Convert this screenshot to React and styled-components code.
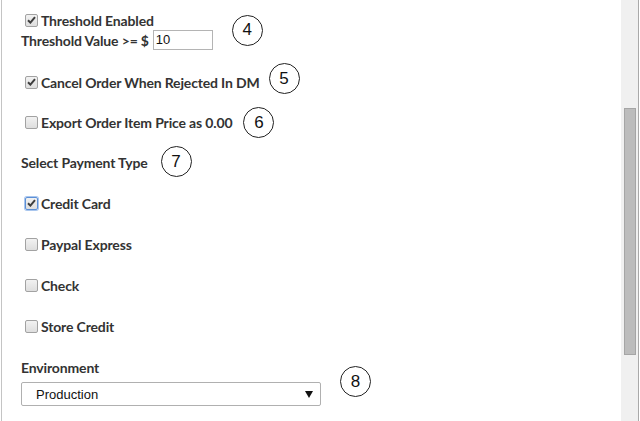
import React from "react";
import styled, { createGlobalStyle } from "styled-components";

const Global = createGlobalStyle`
  html, body { margin: 0; padding: 0; background: #fff; }
  body { font-family: Lato, "Open Sans", sans-serif; overflow: hidden; }
`;

const Page = styled.div`
  display: flex;
  width: 640px;
  height: 421px;
  background: #fff;
`;

const Main = styled.div`
  flex: 1;
  margin-left: 1px;
  border-left: 1px solid #c4c4c4;
  padding: 10px 0 0 19px;
  display: flex;
  flex-direction: column;
  color: #333;
`;

const Track = styled.div`
  width: 17px;
  height: 421px;
  background: #f0f0f0;
  border-right: 1px solid #a9a9a9;
  margin-right: 1px;
  display: flex;
  justify-content: center;
`;

const Thumb = styled.div`
  width: 12px;
  height: 247px;
  margin-top: 108px;
  background: #bcbcbc;
  border: 1px solid #a5a5a5;
  box-sizing: border-box;
  margin-left: 2px;
  margin-right: 1px;
`;

const Row = styled.div`
  display: flex;
  align-items: ${(p) => p.$align || "center"};
  gap: ${(p) => p.$gap || 0}px;
  margin-top: ${(p) => p.$mt || 0}px;
`;

const Col = styled.div`
  display: flex;
  flex-direction: column;
`;

const Line = styled.div`
  display: flex;
  align-items: center;
  height: 20px;
  margin-top: ${(p) => p.$mt || 0}px;
  font-size: 14px;
  font-weight: 700;
  line-height: 17px;
  letter-spacing: -0.15px;
  white-space: nowrap;
`;

const Box = styled.span`
  width: 13px;
  height: 13px;
  box-sizing: border-box;
  margin: 0 3px 0 4px;
  border-radius: 2px;
  border: 1px solid ${(p) => (p.$focus ? "#5b8fd6" : "#a2a2a2")};
  box-shadow: ${(p) => (p.$focus ? "0 0 0 1px #a9c6ee" : "none")};
  background: linear-gradient(#f2f2f2, #dedede);
  display: flex;
  align-items: center;
  justify-content: center;
  flex: none;
`;

const ValueInput = styled.div`
  width: 60px;
  height: 20px;
  box-sizing: border-box;
  margin-left: 4px;
  border: 1px solid #b4b4b4;
  padding-left: 2px;
  font-family: "Liberation Sans", Arial, sans-serif;
  font-size: 13px;
  font-weight: 400;
  letter-spacing: 0;
  line-height: 18px;
  color: #111;
`;

const Circle = styled.div`
  width: 31px;
  height: 31px;
  box-sizing: border-box;
  border: 1px solid #222;
  border-radius: 50%;
  display: flex;
  align-items: center;
  justify-content: center;
  font-family: "Liberation Sans", Arial, sans-serif;
  font-size: 17px;
  color: #111;
  flex: none;
`;

const Label = styled.div`
  margin-top: ${(p) => p.$pad || 0}px;
`;

const Select = styled.div`
  width: 300px;
  height: 24px;
  box-sizing: border-box;
  margin-top: 5px;
  border: 1px solid #b0b0b0;
  border-radius: 2px;
  display: flex;
  align-items: center;
  justify-content: space-between;
  padding: 0 7px 0 14px;
  font-family: "Liberation Sans", Arial, sans-serif;
  font-size: 13px;
  color: #111;
`;

const Check = ({ checked, focus }) => (
  <Box $focus={focus}>
    {checked && (
      <svg width="9" height="8" viewBox="0 0 9 8">
        <path d="M1 4.2 L3.4 6.6 L8 1.2" fill="none" stroke="#3e3e3e" strokeWidth="2" />
      </svg>
    )}
  </Box>
);

const CheckLine = ({ checked, focus, children, mt }) => (
  <Line $mt={mt}>
    <Check checked={checked} focus={focus} />
    {children}
  </Line>
);

export default function App() {
  return (
    <>
      <Global />
      <Page>
        <Main>
          <Row $gap={19}>
            <Col>
              <CheckLine checked>Threshold Enabled</CheckLine>
              <Line>
                Threshold Value &gt;= $
                <ValueInput>10</ValueInput>
              </Line>
            </Col>
            <Circle>4</Circle>
          </Row>

          <Row $align="flex-start" $gap={9} $mt={13}>
            <Label $pad={9}>
              <CheckLine checked>Cancel Order When Rejected In DM</CheckLine>
            </Label>
            <Circle>5</Circle>
          </Row>

          <Row $align="flex-start" $gap={11} $mt={13}>
            <Label $pad={5}>
              <CheckLine>Export Order Item Price as 0.00</CheckLine>
            </Label>
            <Circle>6</Circle>
          </Row>

          <Row $align="flex-start" $gap={13} $mt={8}>
            <Label $pad={6}>
              <Line>Select Payment Type</Line>
            </Label>
            <Circle>7</Circle>
          </Row>

          <CheckLine checked focus mt={16}>Credit Card</CheckLine>
          <CheckLine mt={21}>Paypal Express</CheckLine>
          <CheckLine mt={21}>Check</CheckLine>
          <CheckLine mt={21}>Store Credit</CheckLine>

          <Row $gap={19} $mt={21}>
            <Col>
              <Line>Environment</Line>
              <Select>
                Production
                <svg width="8" height="7" viewBox="0 0 8 7">
                  <path d="M0 0 H8 L4 7 Z" fill="#111" />
                </svg>
              </Select>
            </Col>
            <Circle>8</Circle>
          </Row>
        </Main>
        <Track>
          <Thumb />
        </Track>
      </Page>
    </>
  );
}
